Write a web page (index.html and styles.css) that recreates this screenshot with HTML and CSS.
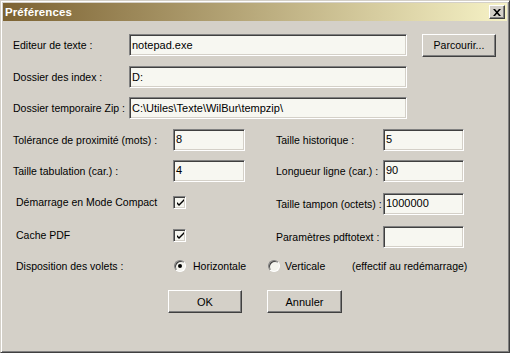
FILE: index.html
```html
<!DOCTYPE html>
<html lang="fr">
<head>
<meta charset="utf-8">
<title>Préférences</title>
<link rel="stylesheet" href="styles.css">
</head>
<body>
<div class="window">
  <div class="titlebar">
    <span class="title">Préférences</span>
    <div class="close">
      <svg width="8" height="7" viewBox="0 0 8 7"><path d="M0 0h2l2 2.2L6 0h2L5 3.5 8 7H6L4 4.8 2 7H0l3-3.5z" fill="#000"/></svg>
    </div>
  </div>
  <div class="content">
    <div class="row r1">
      <span class="lbl w-long">Editeur de texte :</span>
      <div class="field f-long">notepad.exe</div>
      <div class="btn btn-browse">Parcourir...</div>
    </div>
    <div class="row r2">
      <span class="lbl w-long">Dossier des index :</span>
      <div class="field f-long">D:</div>
    </div>
    <div class="row r3">
      <span class="lbl w-long">Dossier temporaire Zip :</span>
      <div class="field f-long">C:\Utiles\Texte\WilBur\tempzip\</div>
    </div>
    <div class="row r4">
      <span class="lbl w-left">Tolérance de proximité (mots) :</span>
      <div class="field f-left">8</div>
      <span class="lbl w-right">Taille historique :</span>
      <div class="field f-right">5</div>
    </div>
    <div class="row r5">
      <span class="lbl w-left">Taille tabulation (car.) :</span>
      <div class="field f-left">4</div>
      <span class="lbl w-right">Longueur ligne (car.) :</span>
      <div class="field f-right">90</div>
    </div>
    <div class="row r6">
      <span class="lbl w-left ind lift">Démarrage en Mode Compact</span>
      <div class="check-cell"><div class="check"><svg width="9" height="9" viewBox="0 0 9 9"><path d="M1 4l2 2 5-5v2L3 8 1 6z" fill="#000"/></svg></div></div>
      <span class="lbl w-right">Taille tampon (octets) :</span>
      <div class="field f-right">1000000</div>
    </div>
    <div class="row r7">
      <span class="lbl w-left ind lift">Cache PDF</span>
      <div class="check-cell"><div class="check"><svg width="9" height="9" viewBox="0 0 9 9"><path d="M1 4l2 2 5-5v2L3 8 1 6z" fill="#000"/></svg></div></div>
      <span class="lbl w-right">Paramètres pdftotext :</span>
      <div class="field f-right"></div>
    </div>
    <div class="row r8">
      <span class="lbl w-radio ind">Disposition des volets :</span>
      <div class="radio on"></div>
      <span class="lbl opt1">Horizontale</span>
      <div class="radio"></div>
      <span class="lbl opt2">Verticale</span>
      <span class="lbl note">(effectif au redémarrage)</span>
    </div>
    <div class="row r9">
      <div class="btn btn-ok">OK</div>
      <div class="btn btn-cancel">Annuler</div>
    </div>
  </div>
</div>
</body>
</html>
```

FILE: styles.css
```css
html, body {
  margin: 0;
  padding: 0;
  background: #d4d0c8;
}

.window {
  width: 510px;
  height: 353px;
  box-sizing: border-box;
  border: 1px solid;
  border-color: #d4d0c8 #404040 #404040 #d4d0c8;
  box-shadow: inset 1px 1px #ffffff, inset -1px -1px #808080;
  padding: 2px;
  background: #d4d0c8;
  font-family: "Liberation Sans", Arial, sans-serif;
  font-size: 10.5px;
  color: #000;
}

.titlebar {
  height: 18px;
  display: flex;
  align-items: center;
  padding: 0 2px 0 2px;
  background: linear-gradient(to right, #7c6232, #f6f2c6);
}

.title {
  color: #fff;
  font-weight: bold;
  font-size: 11.5px;
  letter-spacing: 0.1px;
}

.close {
  margin-left: auto;
  width: 16px;
  height: 14px;
  box-sizing: border-box;
  border: 1px solid;
  border-color: #ffffff #404040 #404040 #ffffff;
  box-shadow: inset -1px -1px #808080;
  background: #d4d0c8;
  display: flex;
  align-items: center;
  justify-content: center;
}

.close svg { display: block; margin-left: -1px; }

.content {
  padding-left: 10px;
}

.row {
  display: flex;
  align-items: center;
  height: 22px;
}

.r1 { margin-top: 13px; }
.r2 { margin-top: 10px; }
.r3 { margin-top: 9px; }
.r4 { margin-top: 10px; }
.r5 { margin-top: 9px; }
.r6 { margin-top: 11px; }
.r7 { margin-top: 11px; }
.r8 { margin-top: 7px; }
.r9 { margin-top: 13px; height: 23px; }

.lbl {
  white-space: nowrap;
  flex: none;
}

.ind { padding-left: 3px; box-sizing: border-box; }
.lift { padding-bottom: 4px; box-sizing: border-box; }

.w-long { width: 116px; }
.w-left { width: 160px; }
.w-right { width: 107px; margin-left: 31px; }
.w-radio { width: 161px; }

.field {
  box-sizing: border-box;
  height: 22px;
  border: 1px solid;
  border-color: #808080 #ffffff #ffffff #808080;
  box-shadow: inset 1px 1px #404040, inset -1px -1px #d4d0c8;
  background: #f7f7f1;
  padding: 3px 2px 0 2px;
  font-size: 11px;
  line-height: 14px;
  white-space: nowrap;
  overflow: hidden;
  flex: none;
}

.f-long { width: 278px; }
.f-left { width: 72px; padding-top: 2px; }
.f-right { width: 81px; padding-top: 2px; }

.btn {
  box-sizing: border-box;
  height: 23px;
  border: 1px solid;
  border-color: #ffffff #404040 #404040 #ffffff;
  box-shadow: inset -1px -1px #808080;
  background: #d4d0c8;
  display: flex;
  align-items: center;
  justify-content: center;
  flex: none;
  font-size: 11px;
}

.btn-browse { width: 74px; margin-left: 15px; font-size: 10.5px; }
.btn-ok { width: 74px; margin-left: 155px; }
.btn-cancel { width: 75px; margin-left: 25px; }

.check-cell {
  width: 72px;
  flex: none;
  display: flex;
  align-items: center;
  margin-top: -4px;
}

.check {
  width: 13px;
  height: 13px;
  box-sizing: border-box;
  border: 1px solid;
  border-color: #808080 #ffffff #ffffff #808080;
  box-shadow: inset 1px 1px #404040, inset -1px -1px #d4d0c8;
  background: #f4f4ee;
  display: flex;
  align-items: center;
  justify-content: center;
}

.check svg { display: block; margin: 1px 0 0 1px; }

.radio {
  width: 12px;
  height: 12px;
  box-sizing: border-box;
  border-radius: 50%;
  border: 1px solid;
  border-color: #808080 #ffffff #ffffff #808080;
  box-shadow: inset 1px 1px #404040;
  background: #f4f4ee;
  flex: none;
  position: relative;
}

.radio.on::after {
  content: "";
  position: absolute;
  left: 3px;
  top: 3px;
  width: 4px;
  height: 4px;
  border-radius: 50%;
  background: #000;
}

.opt1 { margin-left: 7px; width: 75px; }
.opt2 { margin-left: 5px; width: 67px; }
```
